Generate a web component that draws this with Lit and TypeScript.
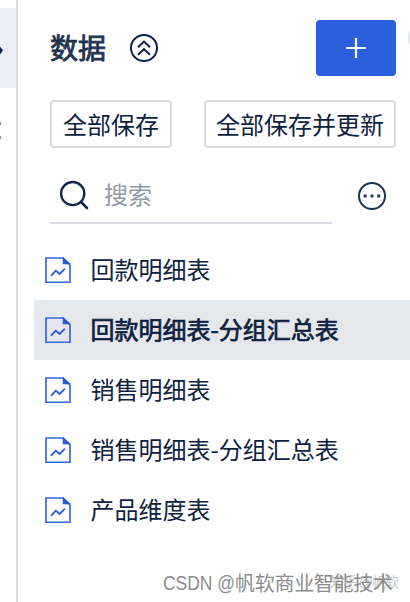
import { LitElement, html, css, svg } from "lit";
import { customElement } from "lit/decorators.js";
import { classMap } from "lit/directives/class-map.js";

interface TableItem {
  name: string;
  selected?: boolean;
}

const tables: TableItem[] = [
  { name: "回款明细表" },
  { name: "回款明细表-分组汇总表", selected: true },
  { name: "销售明细表" },
  { name: "销售明细表-分组汇总表" },
  { name: "产品维度表" },
];

const sheetGlyph = svg`
  <path d="M1 1H18L25 8V25.4H1Z" fill="none" stroke="#3a67d6" stroke-width="1.7"/>
  <path d="M18 0.5V7H25.5Z" fill="#2a5bd7" stroke="#2a5bd7" stroke-width="0.6"/>
  <path d="M6.6 18.2L10.8 13.6L14.6 17L19.4 12.2" fill="none" stroke="#2f60d8" stroke-width="1.9" stroke-linecap="round" stroke-linejoin="round"/>`;

@customElement("app-root")
export class AppRoot extends LitElement {
  static styles = css`
    :host {
      display: flex;
      position: relative;
      width: 410px;
      height: 602px;
      overflow: hidden;
      background: #fff;
      color: #0d2240;
      font: 24px/36px "Noto Sans CJK SC", sans-serif;
    }
    * { box-sizing: border-box; }
    svg { display: block; flex: none; }
    .rail {
      flex: none;
      width: 18px;
      padding-top: 8px;
      border-right: 2px solid #d8dbe2;
    }
    .tab { width: 16px; height: 80px; background: #eceff8; }
    .panel { flex: none; width: 392px; }
    .head {
      display: flex;
      align-items: center;
      height: 56px;
      margin: 20px 14px 0 32px;
    }
    .title {
      width: 80px;
      padding-bottom: 2px;
      font-size: 28px;
      color: #21324f;
      -webkit-text-stroke: 0.8px currentColor;
    }
    .add {
      display: flex;
      align-items: center;
      justify-content: center;
      width: 80px;
      height: 56px;
      margin-left: auto;
      border-radius: 4px;
      background: #295fdc;
    }
    .actions {
      display: flex;
      justify-content: space-between;
      margin: 24px 14px 0 32px;
    }
    .button {
      display: flex;
      align-items: center;
      justify-content: center;
      height: 48px;
      width: 122px;
      border: 2px solid #d9dbdf;
      border-radius: 4px;
      white-space: nowrap;
    }
    .wide { width: 192px; }
    .tools {
      display: flex;
      align-items: center;
      justify-content: space-between;
      margin: 20px 24px 0 32px;
    }
    .search {
      display: flex;
      align-items: center;
      width: 282px;
      height: 56px;
      padding-left: 9px;
      border-bottom: 2px solid #d9dce2;
    }
    .hint { margin-left: 15px; padding-bottom: 2px; color: #9299a7; }
    .list { margin: 16px 0 0 16px; }
    .row {
      display: flex;
      align-items: center;
      height: 60px;
      padding-left: 11px;
    }
    .name { margin-left: 19.5px; padding-bottom: 2px; white-space: nowrap; }
    .selected { background: #e4e7ec; }
    .selected .name { -webkit-text-stroke: 0.7px currentColor; }
    .overlay { position: absolute; left: 0; top: 0; pointer-events: none; }
    .mark { font: 20px "Liberation Sans", "Noto Sans CJK SC", sans-serif; fill: #8c8c8c; }
    .faint { font: 14px "Liberation Sans", "Noto Sans CJK SC", sans-serif; fill: #c8c8c8; }
  `;

  render() {
    return html`
      <div class="rail"><div class="tab"></div></div>
      <main class="panel">
        <header class="head">
          <div class="title">数据</div>
          <svg width="28" height="28" viewBox="0 0 28 28" fill="none" stroke="#10254a" stroke-width="2">
            <circle cx="14" cy="14" r="13"/>
            <path d="M8 13.2L14 7.6L20 13.2M8 20.8L14 15.2L20 20.8"/>
          </svg>
          <div class="add">
            <svg width="20" height="20" viewBox="0 0 20 20">
              <path d="M10 0V20M0 10H20" stroke="#fff" stroke-width="2.2"/>
            </svg>
          </div>
        </header>
        <div class="actions">
          <div class="button">全部保存</div>
          <div class="button wide">全部保存并更新</div>
        </div>
        <div class="tools">
          <div class="search">
            <svg width="30" height="30" viewBox="0 0 30 30" fill="none" stroke="#10254a" stroke-width="2.3">
              <circle cx="13.7" cy="13.6" r="11.6"/>
              <path d="M22 22L28 28" stroke-width="2.6" stroke-linecap="round"/>
            </svg>
            <span class="hint">搜索</span>
          </div>
          <svg width="28" height="28" viewBox="0 0 28 28">
            <circle cx="14" cy="14" r="13" fill="none" stroke="#213455" stroke-width="2"/>
            <path d="M5.7 12.6h3v3h-3zM12.5 12.6h3v3h-3zM19.2 12.6h3v3h-3z" fill="#2b3c5b"/>
          </svg>
        </div>
        <div class="list">
          ${tables.map(
            (t) => html`<div class=${classMap({ row: true, selected: !!t.selected })}>
              <svg width="26" height="26" viewBox="0 0 26 26">${sheetGlyph}</svg>
              <span class="name">${t.name}</span>
            </div>`
          )}
        </div>
      </main>
      <svg class="overlay" width="410" height="602" viewBox="0 0 410 602">
        <path d="M0 46.5L3 50.5L0 54.5Z" fill="#10254a"/>
        <path d="M0 122h1.2v3H0zM0 136h1.2v3H0z" fill="#8c8f96"/>
        <circle cx="422" cy="38" r="14" fill="#e6e8f0"/>
        <text class="faint" x="330" y="587" textLength="69">知乎 @帆软</text>
        <text class="mark" x="163" y="590" textLength="72" lengthAdjust="spacingAndGlyphs">CSDN @</text>
        <text class="mark" x="235" y="591" textLength="158">帆软商业智能技术</text>
      </svg>
    `;
  }
}
